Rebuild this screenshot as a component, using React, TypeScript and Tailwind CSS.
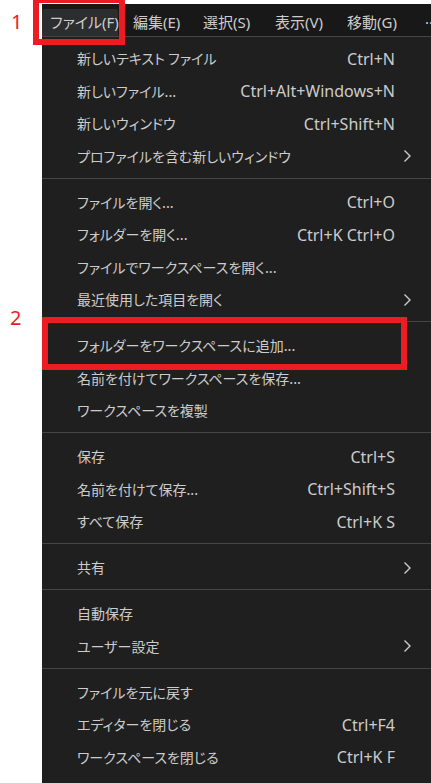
import React from 'react';

type Item = { label: string; keys?: string; sub?: boolean } | 'sep';

const menuBar = [
    { label: '編集(E)', w: 'w-[70px]' },
    { label: '選択(S)', w: 'w-[72px]' },
    { label: '表示(V)', w: 'w-[72px]' },
    { label: '移動(G)', w: 'w-[72px]' },
];

const items: Item[] = [
    { label: '新しいテキスト ファイル', keys: 'Ctrl+N' },
    { label: '新しいファイル...', keys: 'Ctrl+Alt+Windows+N' },
    { label: '新しいウィンドウ', keys: 'Ctrl+Shift+N' },
    { label: 'プロファイルを含む新しいウィンドウ', sub: true },
    'sep',
    { label: 'ファイルを開く...', keys: 'Ctrl+O' },
    { label: 'フォルダーを開く...', keys: 'Ctrl+K Ctrl+O' },
    { label: 'ファイルでワークスペースを開く...' },
    { label: '最近使用した項目を開く', sub: true },
    'sep',
    { label: 'フォルダーをワークスペースに追加...' },
    { label: '名前を付けてワークスペースを保存...' },
    { label: 'ワークスペースを複製' },
    'sep',
    { label: '保存', keys: 'Ctrl+S' },
    { label: '名前を付けて保存...', keys: 'Ctrl+Shift+S' },
    { label: 'すべて保存', keys: 'Ctrl+K S' },
    'sep',
    { label: '共有', sub: true },
    'sep',
    { label: '自動保存' },
    { label: 'ユーザー設定', sub: true },
    'sep',
    { label: 'ファイルを元に戻す' },
    { label: 'エディターを閉じる', keys: 'Ctrl+F4' },
    { label: 'ワークスペースを閉じる', keys: 'Ctrl+K F' },
    { label: 'ウィンドウを閉じる', keys: 'Alt+F4' },
];

function Chevron() {
    return (
        <svg width="9" height="14" viewBox="0 0 9 14" className="block">
            <path d="M1.5 1.5 L7 7 L1.5 12.5" fill="none" stroke="#cccccc" strokeWidth="1.4" />
        </svg>
    );
}

function MenuRow({ item }: { item: Exclude<Item, 'sep'> }) {
    return (
        <div className="flex h-[32.5px] items-center text-[#cccccc]">
            <span className="flex-1 pl-[35px] whitespace-nowrap text-[14px] [font-family:'Noto_Sans_CJK_JP',sans-serif] [font-feature-settings:'palt']">
                {item.label}
            </span>
            {item.keys && (
                <span className="whitespace-nowrap text-[16px] [font-family:'Noto_Sans','Noto_Sans_CJK_JP',sans-serif]">
                    {item.keys}
                </span>
            )}
            <span className="flex w-[36px] shrink-0 items-center pl-[8px]">
                {item.sub && <Chevron />}
            </span>
        </div>
    );
}

export default function App() {
    return (
        <div className="relative h-[783px] w-[431px] overflow-hidden bg-white">
            <div className="ml-[42px] flex flex-col pt-[4px]">
                {/* menu bar */}
                <div className="flex h-[32px] items-stretch overflow-hidden whitespace-nowrap bg-[#181818] text-[15px] text-[#cccccc] [font-family:'Noto_Sans','Noto_Sans_CJK_JP',sans-serif] [font-feature-settings:'palt']">
                    <div className="flex w-[81px] shrink-0 items-end">
                        <div className="flex h-[27px] w-[76px] items-center rounded-t-[3px] bg-[#2c2d2e] pl-[8px]">
                            ファイル(F)
                        </div>
                    </div>
                    {menuBar.map(m => (
                        <div key={m.label} className={`flex shrink-0 items-end ${m.w}`}>
                            <div className="flex h-[27px] items-center pl-[10px]">{m.label}</div>
                        </div>
                    ))}
                    <div className="flex shrink-0 items-end pl-[16px]">
                        <div className="flex h-[27px] items-center">···</div>
                    </div>
                </div>
                {/* dropdown */}
                <div className="border-t border-[#454545] bg-[#1f1f1f] pt-[5.5px]">
                    {items.map((it, i) =>
                        it === 'sep' ? (
                            <div key={i} className="mt-[5px] mb-[7.5px] h-px bg-[#454545]" />
                        ) : (
                            <MenuRow key={i} item={it} />
                        )
                    )}
                </div>
            </div>

            {/* annotations */}
            <div className="absolute left-[33px] top-[-3px] h-[48px] w-[92px] border-[6px] border-[#ec1c24]" />
            <div className="absolute left-[42px] top-[317px] h-[53px] w-[365px] border-[6px] border-[#ec1c24]" />
            <span className="absolute left-[11px] top-[12px] text-[20px] leading-none text-[#ec1c24] [font-family:'Noto_Sans',sans-serif]">1</span>
            <span className="absolute left-[10px] top-[308px] text-[20px] leading-none text-[#ec1c24] [font-family:'Noto_Sans',sans-serif]">2</span>
        </div>
    );
}
